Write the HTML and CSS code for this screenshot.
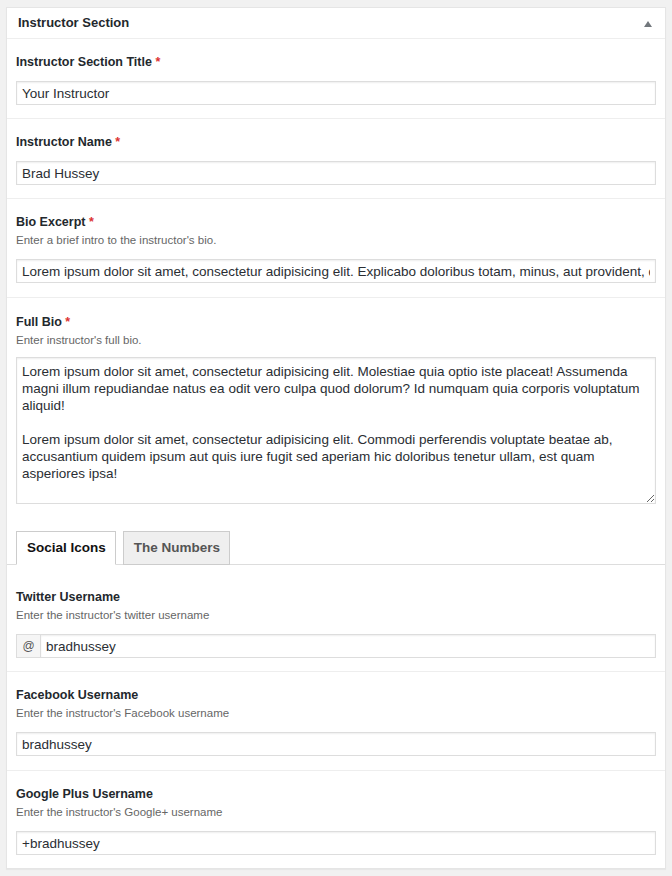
FILE: index.html
```html
<!DOCTYPE html>
<html lang="en">
<head>
<meta charset="utf-8">
<title>Instructor Section</title>
<link rel="stylesheet" href="styles.css">
</head>
<body>
<div class="postbox">
  <div class="postbox-header">
    <h2 class="postbox-title">Instructor Section</h2>
    <span class="toggle-arrow"></span>
  </div>

  <div class="field">
    <label class="field-label">Instructor Section Title <span class="req">*</span></label>
    <input class="text-input" type="text" value="Your Instructor">
  </div>

  <div class="field">
    <label class="field-label">Instructor Name <span class="req">*</span></label>
    <input class="text-input" type="text" value="Brad Hussey">
  </div>

  <div class="field field-desc-row">
    <label class="field-label">Bio Excerpt <span class="req">*</span></label>
    <p class="field-desc">Enter a brief intro to the instructor's bio.</p>
    <input class="text-input" type="text" value="Lorem ipsum dolor sit amet, consectetur adipisicing elit. Explicabo doloribus totam, minus, aut provident, quos.">
  </div>

  <div class="field field-last">
    <label class="field-label">Full Bio <span class="req">*</span></label>
    <p class="field-desc">Enter instructor's full bio.</p>
    <textarea class="text-area">Lorem ipsum dolor sit amet, consectetur adipisicing elit. Molestiae quia optio iste placeat! Assumenda magni illum repudiandae natus ea odit vero culpa quod dolorum? Id numquam quia corporis voluptatum aliquid!

Lorem ipsum dolor sit amet, consectetur adipisicing elit. Commodi perferendis voluptate beatae ab, accusantium quidem ipsum aut quis iure fugit sed aperiam hic doloribus tenetur ullam, est quam asperiores ipsa!

Lorem ipsum dolor sit amet, consectetur adipisicing elit. Quisquam nulla laboriosam, quibusdam eius voluptatem perferendis amet.</textarea>
  </div>

  <div class="tabs">
    <div class="tab tab-active">Social Icons</div>
    <div class="tab">The Numbers</div>
  </div>

  <div class="tab-panel">
    <div class="field sub-field sub-first">
      <label class="field-label">Twitter Username</label>
      <p class="field-desc">Enter the instructor's twitter username</p>
      <div class="input-group">
        <span class="addon">@</span>
        <input class="text-input group-input" type="text" value="bradhussey">
      </div>
    </div>

    <div class="field sub-field">
      <label class="field-label">Facebook Username</label>
      <p class="field-desc">Enter the instructor's Facebook username</p>
      <input class="text-input" type="text" value="bradhussey">
    </div>

    <div class="field sub-field sub-last">
      <label class="field-label">Google Plus Username</label>
      <p class="field-desc">Enter the instructor's Google+ username</p>
      <input class="text-input" type="text" value="+bradhussey">
    </div>
  </div>
</div>
</body>
</html>
```

FILE: styles.css
```css
* {
  box-sizing: border-box;
}

html, body {
  margin: 0;
  padding: 0;
}

body {
  background: #f1f1f1;
  padding: 7px 6px 8px 6px;
  font-family: "Liberation Sans", Arial, sans-serif;
  color: #23282d;
}

.postbox {
  width: 660px;
  background: #fff;
  border: 1px solid #e5e5e5;
  box-shadow: 0 1px 1px rgba(0, 0, 0, 0.04);
}

.postbox-header {
  display: flex;
  align-items: center;
  justify-content: space-between;
  height: 31px;
  padding: 0 13px 0 11px;
  border-bottom: 1px solid #eee;
}

.postbox-title {
  margin: 0;
  font-size: 13px;
  font-weight: bold;
  line-height: 30px;
  color: #23282d;
}

.toggle-arrow {
  width: 0;
  height: 0;
  border-left: 4px solid transparent;
  border-right: 4px solid transparent;
  border-bottom: 6px solid #72777c;
  margin-top: 2px;
}

.field {
  padding: 15px 9px 13px 9px;
  border-bottom: 1px solid #eee;
}

.field-desc-row {
  padding-bottom: 14px;
}

.field-last {
  border-bottom: none;
  padding-top: 16px;
  padding-bottom: 0;
}

.field-label {
  display: block;
  font-size: 12.5px;
  font-weight: bold;
  line-height: 16px;
  color: #23282d;
  margin-bottom: 11px;
}

.req {
  color: #dc3232;
}

.field-desc {
  margin: -9px 0 11px 0;
  font-size: 11.5px;
  line-height: 16px;
  color: #666;
}

.field-last .field-desc {
  margin-bottom: 9px;
}

.text-input {
  display: block;
  width: 100%;
  height: 24px;
  margin: 0;
  padding: 0 5px;
  border: 1px solid #ddd;
  box-shadow: inset 0 1px 2px rgba(0, 0, 0, 0.07);
  background: #fff;
  font-family: "Liberation Sans", Arial, sans-serif;
  font-size: 13.5px;
  color: #2a2e33;
  outline: none;
}

.text-area {
  display: block;
  width: 100%;
  height: 147px;
  margin: 0;
  padding: 5px 5px 6px 5px;
  border: 1px solid #ddd;
  box-shadow: inset 0 1px 2px rgba(0, 0, 0, 0.07);
  font-family: "Liberation Sans", Arial, sans-serif;
  font-size: 13.5px;
  line-height: 17px;
  color: #2a2e33;
  overflow: hidden;
  resize: vertical;
  outline: none;
}

.tabs {
  display: flex;
  gap: 7px;
  padding: 27px 9px 0 9px;
  border-bottom: 1px solid #ddd;
}

.tab {
  height: 34px;
  margin-bottom: -1px;
  padding: 0 9px 0 10px;
  border: 1px solid #ccc;
  background: #efefef;
  font-size: 13.5px;
  font-weight: bold;
  line-height: 32px;
  color: #555;
}

.tab-active {
  background: #fff;
  border-bottom-color: #fff;
  color: #111;
}

.sub-field {
  padding-top: 15px;
  padding-bottom: 14px;
}

.sub-first {
  padding-top: 24px;
  padding-bottom: 13px;
}

.sub-last {
  border-bottom: none;
  padding-bottom: 13px;
}

.input-group {
  display: flex;
}

.addon {
  flex: 0 0 24px;
  height: 24px;
  border: 1px solid #ddd;
  border-right: none;
  background: #f5f5f5;
  font-size: 12px;
  line-height: 22px;
  text-align: center;
  color: #555;
}

.group-input {
  flex: 1;
  width: auto;
}
```
